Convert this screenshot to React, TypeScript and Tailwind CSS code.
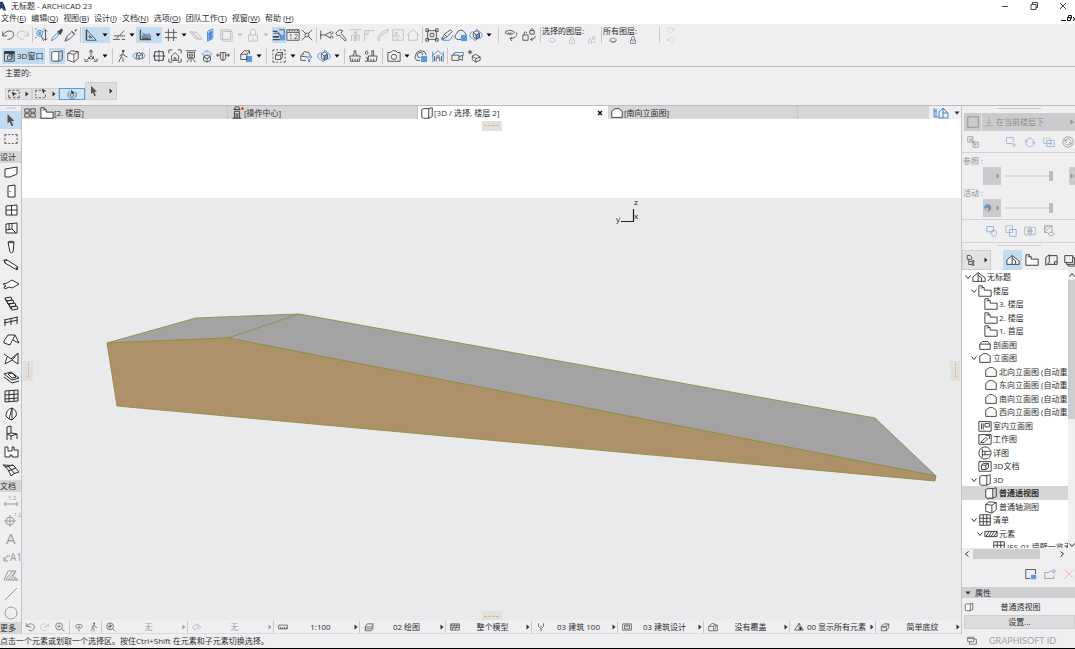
import type { ReactNode } from "react";
import clsx from "clsx";

type Glyph = {
  d?: string; // outline in the text colour
  f?: string; // solid in the text colour
  b?: string; // blue outline
  bf?: string; // blue solid
  w?: string; // white backing
  t?: [number, number, number, string][];
};

const GLYPHS: Record<string, Glyph> = {
  undo: { d: "M2 4v5h5M2 9C4 3 14 1 14.500 7.500 14.500 11 11 13 7.500 13" },
  redo: { d: "M14 4v5H9M14 9C12 3 2 1 1.500 7.500 1.500 11 5 13 8.500 13" },
  zoomSelect: { d: "M12 2v12M10 4l2-2 2 2M10 12l2 2 2-2M7 9l3 6", b: "M9 6A3.500 3.500 0 112 6a3.500 3.500 0 017 0zM0 1h2M9 1h2M0 11h2", bf: "M4 4h3v4H4z" },
  dropper: { f: "M8 4l2-1 3-2.500 2 2L13 6l-1 2z", d: "M9 5l2.500 2.500", b: "M8 6l-5 5-1.500 3.500L5 13l5-5z" },
  syringe: { f: "M9 3l4 4-1 1-4-4zM12 3l2-2 1 1-2 2z", d: "M8 5l-5 5-2 5 5-2 5-5", b: "M4 11l-2 3" },
  setSquare: { d: "M3 2l11 12M3 2v12h11M6 8.500V11h3z", f: "M2 2h1.500v12H2z" },
  snap: { d: "M1 13h8M2 9h6l6-6M9 9h6M8 9l-3 3M11 13h4" },
  guide: { f: "M2 2h1.500v12H2zM2 12.500h13V14H2z", d: "M5 9h9v3H5zM5 6l3 2M6 10.500h6", b: "M6 7h8" },
  grid: { d: "M5 1v14M11 1v14M1 5h14M1 11h14" },
  plane: { d: "M1 4l6 8 8 1-6-8zM3 4l7 9M5 5l7 8" },
  planeV: { b: "M4 4l6-3v11l-6 3zM4 8l6-3M4 12l6-3M7 2v12", bf: "M5 5l4-2v9l-4 2z" },
  square: { d: "M2 2h11v11H2zM4 4h11v11H4z" },
  lock: { d: "M3 8h10v7H3zM5 8V4a3 3 0 016 0v4M8 11v2" },
  trace: { f: "M1 3h5v1.500H1zM1 9h7v2H1zM1 12.500h8V14H1z", d: "M2 6h5l3 4M6 4l4 4M8 2h6v4", bf: "M9 9l6-3v8H9z" },
  ruler: { d: "M1 2h14v12H1zM1 5h14M4 2v2M7 2v2M10 2v2M13 2v2", t: [[3, 13, 8, "1"], [9, 13, 8, "2"]] },
  cross: { d: "M2 2l4 4h4l4-4M2 14l4-4V6M14 14l-4-4V6M6 10h4" },
  trim: { d: "M2 3v10M1 8h6l7-4M7 8l7 4M13 5a1.500 1.500 0 102-1M13 11a1.500 1.500 0 112 1" },
  hammer: { d: "M2 6l4-4 4 1-2 3 6 7-1 2-7-7-2 1z" },
  raise: { d: "M1 2h14M4 15V8h3v7M10 15V8h3v7M8.500 4v11M6.500 6l2-2 2 2" },
  corner: { d: "M3 15V3h11M3 7h4V3" },
  fillet: { d: "M2 15C2 8 7 3 14 2M4 15c0-6 4-9 9-10M12 1l2 1-1 3" },
  resize: { d: "M2 2h12v12H2zM5 5l6 6M5 8V5h3M2 9h5v5" },
  house: { d: "M1 8l7-6 7 6M3 7v7h10V7" },
  group: { d: "M3 3h10v10H3zM6 6h4v4H6zM1 1h3v3H1zM12 1h3v3h-3zM1 12h3v3H1zM12 12h3v3h-3z" },
  pen: { d: "M2 13l3-6 7-5 2 2-6 6zM5 7l3 3", b: "M3 14h8l4-6M1 11l4 3" },
  roundSave: { d: "M8 13H4a3.500 3.500 0 01-1-6.500 5 5 0 019.500-1L14 8", bf: "M8 8h7v7H8z" },
  orbitCube: { d: "M5 5l4-2 3 3v5l-4 2-3-3zM5 5l3 3 4-2M8 8v5", b: "M4 4C0 6 0 11 4 12M12 4c4 2 4 7 0 8M8 1l4 3M8 15l-4-3", bf: "M8 8l4-2v5l-4 2z" },
  eyeRot: { d: "M1 5c3-3 8-3 11 0-3 3-8 3-11 0zM5 5a1.500 1.500 0 003 0M14 5c2 3-1 7-7 7M9 10l-2 2 2 3" },
  locks: { d: "M1 8h6v6H1zM2.500 8V6a1.500 1.500 0 013 0M9 3h5v4H9zM10 3a1.500 1.500 0 013-1M15 9c0 3-2 4-5 4M12 11l-2 2 2 2" },
  eye: { d: "M1 8c4-5 10-5 14 0-4 5-10 5-14 0zM2 9c4 5 9 5 13 0" },
  window3d: { d: "M2 2h13v13H2zM2 4.500h13M6 8h5v5H6zM6 8l2-2h5l-2 2M13 6v5l-2 2", f: "M2 2h13v2.500H2z" },
  persp: { w: "M2 3h8v10H2z", d: "M2 4l2-1h6v11H4l-2-1zM10 3l4-1v10l-4 2" },
  axo: { w: "M2 5h8v9H2z", d: "M2 5l7 1v9l-7-2zM2 5l4-3 8 1-5 3M14 3v8l-5 4" },
  axes: { d: "M8 2v6l-5 5M8 8l5 5M6 4l2-3 2 3M5 9a3 3 0 106-1M1 11v3h4M15 11v3h-4" },
  walk: { d: "M8 5l-2 4 2 2v4M6 9l-3 6M8 5l2 3 3 1M7 6L4 8", f: "M7 1h2.500v3H7z" },
  orbit: { d: "M5 6l3-2 4 2v4l-4 2-3-2zM5 6l3 2 4-2M8 8v4", b: "M5 11C0 10 0 5 6 4M11 11c5-1 5-6 0-7M6 13l-2-2 2-2" },
  globe: { d: "M3 3h10v10H3zM8 1v14M1 8h14M4 3C2 6 2 10 4 13M12 3c2 3 2 7 0 10" },
  fitHome: { d: "M1 5V1h4M11 1h4v4M15 11v4h-4M5 15H1v-4M4 8l4-4 4 4v5H4zM7 13v-3h2v3" },
  station: { d: "M2 2h12M4 4h8v6H4zM6 6h4v2H6zM7 10l-4 5M9 10l4 5M8 10v5" },
  sunOrbit: { d: "M4 9l4-2 4 2v4l-4 2-4-2zM4 9l4 2 4-2M8 11v4", b: "M2 5h2M5 2l1 2M8 1v3M11 2l-1 2M14 5h-2M3 7h10" },
  section: { d: "M5 4h6v6a3 3 0 01-6 0zM0 7h5M11 7h5M2 5v4M14 5v4M8 4v9" },
  cubeSave: { d: "M2 6l4-4h6l-3 4v6H2zM2 6h7M12 2v4", bf: "M8 8h7v7H8z" },
  marqueeCube: { d: "M1 1h2M5 1h2M9 1h2M13 1h2v2M15 5v2M15 9v2M15 13v2h-2M11 15H9M7 15H5M3 15H1v-2M1 11V9M1 7V5M1 3V1M4 7h6v5H4zM4 7l2-3h6v5l-2 3M10 7l2-3" },
  filterCube: { d: "M2 8l4-5 5 1 2 4M2 8v5h6M2 8l6 1M4 5l2 2", b: "M8 9h7l-3 3v3l-1-1v-2z" },
  brush: { d: "M2 8h12l-1 6H3zM6 8V6h1V2h2v4h1v2M5 11v3M8 11v3M11 11v3" },
  brushes: { d: "M5 8h10l-1 6H5zM9 8V2h2v6M3 2C1 4 1 6 3 6s2-2 0-4zM2 10h2v4H1M8 11v3M11 11v3" },
  camera: { d: "M1 4h3l2-2h4l2 2h3v10H1zM11 9a3 3 0 11-6 0 3 3 0 016 0z" },
  cameraSave: { d: "M7 13H3L1 10l2-6 4-2 5 1 2 4M10 7a3 3 0 10-3 3", bf: "M8 8h7v7H8z" },
  homeBars: { b: "M2 3v12M14 3v12M1 8l7-6 7 6", d: "M4 8v6M12 8v6M6 14v-4h4v4M6 8h4" },
  video: { d: "M1 7h8v6H1zM9 9l4-2v6l-4-2M3 7l1-3", b: "M4 4h10v4" },
  sunCube: { d: "M6 8l4-2 5 3v4l-5 2-4-3zM6 8l4 3 5-2M10 11v4M2 2l3 3M5 2L2 5M3.500 1v5M1 3.500h5" },
  marqueePick: { d: "M1 3h3M6 3h3M11 3h4M1 3v3M1 9v4h3M7 13h3M15 5v3M12 13h3v-3", f: "M5 5l7 3-4 1-1 3z" },
  marquee: { d: "M1 3h2M5 3h3M1 3v3M1 8v2M1 12v1h2M5 13h3M10 13h3M14 9v3", f: "M9 1l6 3-3 1-1 3z" },
  rotateSel: { d: "M4 4C0 7 1 15 8 15s9-7 5-11M11 9a3 3 0 11-6 0 3 3 0 016 0z", f: "M6 1l6 5-3 1-1 2z" },
  pointer: { f: "M4 1l8 8H8.500l2 5-2 1-2-5L4 12z" },
  tabsGrid: { d: "M1 2.500h6v4.500H1zM9 2.500h6v4.500H9zM1 9h6v4.500H1zM9 9h6v4.500H9z" },
  story: { w: "M1 3h5v4h9v6H1z", d: "M1 2h4v2h2v3h8v7H1zM3 4.500h2" },
  action: { d: "M4 4h8M5 4l1-3h4l1 3M5 6h6M5 6v8M11 6v8M3 14h10M7 8v6M9 8v6" },
  elevation: { w: "M2 13V6l4-3h4l4 3v7z", d: "M2 13V6l4-3h4l4 3v7z" },
  navHome: { b: "M1 3v9h4M1 6h3M3 4v8M6 13V7l4-4 5 5v5H6M10 3v5h5M10 8v5" },
  sectionMark: { w: "M2 13V7l3-3h6l3 3v6z", d: "M2 13V7l3-3h6l3 3v6zM2 7h12" },
  project: { w: "M1 13V8l6-5 8 5v5z", d: "M1 13V8l6-5 8 6v4zM7 3v10M7 6l4 3v4" },
  interior: { d: "M1 3h14v11H1zM4 5v7M6 5v7M8 5h5v4H8z" },
  worksheet: { d: "M1 3h14v11H1zM3 12l6-6 2 2-4 4zM9 4h4v4" },
  detail: { d: "M15 8A7 7 0 111 8a7 7 0 0114 0zM5 3v10M5 6h9M5 10h9M8 6v4" },
  doc3d: { d: "M1 3h14v11H1zM4 7h5v5H4zM4 7l2-2h6v5l-3 2M9 7l3-2" },
  list: { w: "M2 2h12v12H2z", d: "M2 2h12v12H2zM6 2v12M10 2v12M2 6h12M2 10h12" },
  hatch: { d: "M1 5h14v6H1zM2 11l4-6M5 11l4-6M8 11l4-6M11 11l4-6" },
  layout: { d: "M2 14V5l4-3v9zM6 3h9v10H4M12 13v-3h3" },
  publish: { d: "M2 3h9v8H2zM4 11v2h9V5h-2M6 13v2h9V7h-2" },
  tree: { d: "M3 2h4l2 2v3H3zM5 7v7h3M5 10h3M9 9h3v2H9zM9 13h3v2H9z" },
  under: { d: "M1 14h14M8 2v9M5 8l3 3 3-3" },
  swap: { d: "M1 1h7v7H1zM8 8h7v7H8zM4 4l8 8M4 7V4h3M12 9v3H9" },
  move: { b: "M10 10H2V2h9v6", d: "M12 9v6M9 12h6" },
  rotate: { b: "M3 6l5-4 5 4v6l-5 3-5-3z", d: "M1 8l2-3 2 3M15 8l-2 3-2-3" },
  offset: { d: "M1 3h9v7H1z", b: "M5 6h10v8H5zM7 10h5M10 8l2 2-2 2" },
  refresh: { d: "M15 8A7 7 0 111 8a7 7 0 0114 0zM4 7c1-4 7-4 8 0M12 9c-1 4-7 4-8 0M4 4v3h3M12 12V9H9" },
  sheet: { d: "M2 2h12v12H2z" },
  rgb: { f: "M8 2a5 5 0 015 5H8zM8 13a5 5 0 005-6H8z", bf: "M8 2a5 5 0 00-5 8l5-3z", d: "M3 10c2 4 7 4 9 1" },
  handMove: { b: "M1 2h9v7H1z", d: "M6 9l2-2 2 1 1-1 2 1 1 1v4l-2 2H9z" },
  overlap: { d: "M1 1h9v9H1z", b: "M6 6h9v9H6z" },
  splitView: { d: "M1 3h5v10H1zM10 3h5v10h-5z", b: "M8 1v14M4 8h8" },
  shadeDisc: { d: "M2 1h10v8M2 1v9h4M3 9l8-8M2 6l5-5M7 12c2-3 6-3 8 0-2 3-6 3-8 0z" },
  newView: { d: "M1 2h13v6M1 2v12h6", bf: "M8 9h7v6H8z" },
  newFolder: { d: "M1 14V6h5l2-2h2M1 14h12v-4", b: "M13 1v7M9.500 4.500h7M11 2l4 5M15 2l-4 5" },
  remove: { d: "M2 2l12 12M14 2L2 14" },
  cascade: { d: "M1 2h10v7H1zM1 4h10M4 9v4h11V5h-4" },
  zoomUndo: { d: "M2 2v5h5M3 7c2-6 12-5 12 1s-8 8-10 4M6 8h4" },
  zoomRedo: { d: "M14 2v5H9M13 7C11 1 1 2 1 8s8 8 10 4M6 8h4" },
  zoomIn: { d: "M12 7A5.500 5.500 0 111 7a5.500 5.500 0 0111 0zM11 11l4 4M4 7h5M6.500 4.500v5" },
  fit: { d: "M12 7A5.500 5.500 0 111 7a5.500 5.500 0 0111 0zM11 11l4 4M3 5l3 3M10 5L7 8M3 9l7-4M6.500 2v10" },
  turn: { d: "M6 10C1 9 1 4 8 4s7 5 2 6M8 7v8M6 9l2-2 2 2" },
  angle: { d: "M1 9l5-5 4 4-5 5zM8 3l6 5-4 4" },
  scale: { d: "M1 5h14v6H1zM4 8v3M7 8v3M10 8v3M13 8v3" },
  layers: { d: "M2 8l3-5h10l-3 5zM2 11h10l3-5M2 14h10l3-5M2 8v6" },
  model: { d: "M1 3h14v10H1zM1 6h14M1 9h14M4 3l-2 3M8 3l-2 3M12 3l-2 3M6 6l2 3M10 6l2 3M5 9l-2 4M10 9l-2 4" },
  penSet: { d: "M4 2v5l4 4 4-4V2M8 11v4M7 7h2" },
  frame: { d: "M1 3h14v10H1zM4 5h8v6H4zM6 7h4" },
  override: { d: "M1 7h8v7H1zM3 7c0-6 9-6 10 0M9 5h6v9H9M11 8h2M11 11h2" },
  reno: { d: "M1 13h14L8 2zM8 2v11", f: "M9 8h3v5H9z" },
  solid: { d: "M2 7h8v7H2zM2 7l4-4h8l-4 4M14 3v6l-4 5M4 9h4" },
  tMarquee: { d: "M1 3h2M5 3h2M9 3h2M13 3h2v2M15 7v2M15 11v2h-2M11 13H9M7 13H5M3 13H1v-2M1 9V7M1 5V3" },
  tWall: { w: "M2 4l12-2v8L2 14z", d: "M2 5l12-2v7L7 13H2z" },
  tDoor: { w: "M5 3l7-1v12H5z", d: "M5 3l7-1v12H5zM7 8v1" },
  tWindow: { w: "M3 4l11-1v10H3z", d: "M3 4l11-1v10H3zM8.500 3.500V13M3 8h11" },
  tCorner: { w: "M3 4l11-1v10H3z", d: "M3 4l11-1v10H3zM9 3v6l4 4M9 9l-6 1M6 4v6" },
  tColumn: { w: "M5 2h6l-1 12H7z", d: "M5 3c1-1 5-1 6 0l-1 10c-1 1-2 1-3 0zM5 3c1 1 5 1 6 0" },
  tBeam: { w: "M1 4l3-1 11 7v2h-2z", d: "M1 3h3l11 7-1 3L2 6zM1 3l1 3M4 3l-2 1M14 13l-1-3" },
  tSlab: { w: "M0 9l3-3 6-2 7 4-7 4-7 0z", d: "M0 8l4-1 5-3 7 4-7 4-3-1-4 2-1-2 2-1z" },
  tStair: { d: "M2 3l6-1 1 3-6 1zM4 6l6-1 1 3-6 1zM6 9l6-1 1 3-6 1zM8 12l6-1 1 3-6 1zM2 3l6 11" },
  tRail: { d: "M1 7l14-3M1 10l14-3M2 7v6M8 5v7M14 4v7" },
  tRoof: { w: "M1 9l5-6 6 0 4 8-5-2-4 5z", d: "M1 9l4-6h7l-5 10-6-2zM12 3l4 8-4-2-2-1" },
  tShell: { w: "M1 3l7 5 7-6v11l-6-4-7 4z", d: "M1 3l7 5 7-6v11L9 9l-7 4 2-7M15 2L9 9" },
  tSkylight: { d: "M1 5l7-2 8 6-7 2zM1 8l8 6 7-2M5 5l4-1 4 4-4 1z" },
  tCurtain: { d: "M2 3l13-1v11L2 14zM6 3v11M11 2v11M2 7l13-1M2 11l13-1" },
  tMorph: { w: "M3 7l6-5v12l-5-1z", d: "M9 2C5 3 3 6 3 10l3 3 3 1V2M9 2c4 2 5 5 4 8l-4 4M9 2L6 13" },
  tChair: { d: "M4 2l4-1v7l6 1M4 2v7l4 2 6-2M4 9v6M8 11v4M14 9v5M8 8l-4 1" },
  tZone: { w: "M2 2h8v4h4v8H2z", d: "M2 3h3v4h4V3h2v3h4v7H9v-2H7v2H2z" },
  tMesh: { d: "M0 3c5 0 7 1 10 0l6 7c-3 1-5 1-8 4C6 9 4 5 0 3zM5 4l7 8M2 5l8-2M5 9l8-3" },
  tDim: { d: "M1 11h14M2 9v4M14 9v4", t: [[5, 7, 6, "1.2"]] },
  tLevel: { d: "M11 9A4 4 0 113 9a4 4 0 018 0zM7 3v12M1 9h12", t: [[11, 5, 5, "1.2"]] },
  tText: { t: [[3, 14, 15, "A"]] },
  tLabel: { d: "M1 12l3-5h3M1 8v4h4", t: [[7, 12, 10, "A1"]] },
  tFill: { d: "M1 13l4-9h8l-3 5 5 4zM3 12l7-8M5 13l7-8M8 13l2-3M11 13l1-2" },
  tLine: { d: "M2 14L14 2" },
  tCircle: { d: "M14 8A6 6 0 112 8a6 6 0 0112 0z" },
};

function Icon({ name, className = "size-3.5" }: { name: string; className?: string }) {
  const g = GLYPHS[name];
  return (
    <svg viewBox="0 0 16 16" className={clsx("shrink-0 overflow-visible", className)} fill="none" strokeWidth={1} aria-hidden="true">
      {g.w && <path d={g.w} fill="#fff" />}
      {g.bf && <path d={g.bf} fill="#5a9ae6" />}
      {g.f && <path d={g.f} fill="currentColor" />}
      {g.d && <path d={g.d} stroke="currentColor" />}
      {g.b && <path d={g.b} stroke="#3f86de" />}
      {g.t?.map(([x, y, size, s]) => (
        <text key={s} x={x} y={y} fontSize={size} fill="currentColor">{s}</text>
      ))}
    </svg>
  );
}

function Caret({ down = false, className = "" }: { down?: boolean; className?: string }) {
  return (
    <svg viewBox="0 0 6 6" className={clsx("size-1.5 shrink-0", className)} fill="currentColor" aria-hidden="true">
      <path d={down ? "M0.500 1.500h5L3 4.500z" : "M1.500 0.500v5L4.500 3z"} />
    </svg>
  );
}

const Sep = ({ className = "w-1" }: { className?: string }) => (
  <span className={clsx("flex h-4 shrink-0 justify-center", className)}>
    <span className="w-px bg-[#c9c9cb]" />
  </span>
);

function Tool({ icon, w = "w-3.5", menu, on, dim }: { icon: string; w?: string; menu?: string; on?: boolean; dim?: boolean }) {
  return (
    <button
      type="button"
      aria-label={icon}
      disabled={dim}
      className={clsx("flex h-4 shrink-0 items-center", on && "bg-[#bfdcf2]", dim ? "text-[#bcbcbf]" : "text-[#4a4a4c]")}
    >
      <span className={clsx("grid shrink-0 place-items-center", w)}>
        <Icon name={icon} />
      </span>
      {menu && (
        <span className={clsx("grid shrink-0 place-items-center", menu, !dim && "text-black")}>
          <Caret down />
        </span>
      )}
    </button>
  );
}

const MENUS = [
  ["文件", "E"],
  ["编辑", "Q"],
  ["视图", "B"],
  ["设计", "I"],
  ["文档", "N"],
  ["选项", "O"],
  ["团队工作", "T"],
  ["视窗", "W"],
  ["帮助 ", "H"],
];

function TitleBar() {
  return (
    <header className="bg-white">
      <div className="flex h-3 items-center">
        <svg viewBox="0 0 8 10" className="mr-1 h-2.5 w-[7px]" aria-hidden="true">
          <path d="M0 0h3l2 4 2 6H4L2 7 0 9z" fill="#23406f" />
        </svg>
        <h1 className="flex-1">无标题 - ARCHICAD 23</h1>
        <div className="flex items-center gap-[21px] pr-2 text-[#444]">
          <button type="button" aria-label="Minimize">
            <svg viewBox="0 0 8 8" className="size-2" stroke="currentColor"><path d="M1 4.500h6" /></svg>
          </button>
          <button type="button" aria-label="Restore">
            <svg viewBox="0 0 8 8" className="size-2" fill="none" stroke="currentColor"><path d="M1 2.500h5v5H1zM2.500 2.500v-2h5v5H6" /></svg>
          </button>
          <button type="button" aria-label="Close">
            <svg viewBox="0 0 8 8" className="size-2" stroke="currentColor"><path d="M1 1l6 6M7 1L1 7" /></svg>
          </button>
        </div>
      </div>
      <nav className="flex h-3 items-center gap-[5px] pl-px">
        {MENUS.map(([label, key]) => (
          <button key={key} type="button" className="whitespace-pre">
            {label}(<u>{key}</u>)
          </button>
        ))}
        <svg viewBox="0 0 14 8" className="ml-auto h-2 w-3.5" fill="none" stroke="#111" aria-hidden="true">
          <path d="M0 6.500h5M6.500 3.500h3v3h-3zM7.500 3.500v-2h3v3h-1M12 3l3 4M15 3l-3 4" />
        </svg>
      </nav>
    </header>
  );
}

function Toolbars() {
  return (
    <div className="border-b border-[#bcbcbf]">
      <div className="flex h-[21px] items-center overflow-hidden">
        <Tool icon="undo" w="w-[15px]" />
        <Tool icon="redo" w="w-[15px]" dim />
        <Sep />
        <Tool icon="zoomSelect" w="w-4" />
        <Tool icon="dropper" />
        <Tool icon="syringe" />
        <Sep />
        <Tool icon="setSquare" w="w-[18px]" menu="w-2.5" on />
        <Tool icon="snap" w="w-[18px]" menu="w-2" />
        <Tool icon="guide" w="w-[18px]" menu="w-2" on />
        <Tool icon="grid" w="w-[18px]" menu="w-2" />
        <Tool icon="plane" w="w-4" dim />
        <Tool icon="planeV" />
        <Tool icon="square" w="w-4" menu="w-3" dim />
        <Tool icon="lock" menu="w-3" dim />
        <Tool icon="trace" on />
        <Tool icon="ruler" />
        <Tool icon="cross" />
        <Sep />
        <Tool icon="trim" w="w-4" />
        <Tool icon="hammer" />
        <Tool icon="raise" dim />
        <Tool icon="corner" dim />
        <Tool icon="fillet" dim />
        <Tool icon="resize" w="w-4" dim />
        <Tool icon="house" dim />
        <Sep />
        <Tool icon="group" w="w-4" />
        <Tool icon="pen" />
        <Tool icon="roundSave" />
        <Tool icon="orbitCube" w="w-4" menu="w-2.5" />
        <Sep className="w-2" />
        <Tool icon="eyeRot" w="w-[18px]" />
        <Tool icon="locks" w="w-[18px]" />
        <Sep />
        <div className="flex w-[57px] shrink-0 flex-col">
          <span className="leading-[10px]">选择的图层:</span>
          <div className="flex gap-2 pl-1 text-[#b0b0b3]">
            <Icon name="eye" className="h-2 w-3" />
            <Icon name="lock" className="h-2 w-3" />
            <Icon name="locks" className="h-2 w-3" />
          </div>
        </div>
        <Sep />
        <div className="flex w-[54px] shrink-0 flex-col">
          <span className="leading-[10px]">所有图层:</span>
          <div className="flex gap-2 pl-1">
            <Icon name="eye" className="h-2 w-3" />
            <Icon name="lock" className="h-2 w-3" />
          </div>
        </div>
        <Sep />
        <div className="flex w-5 flex-col items-center gap-0.5 text-[#bcbcbf]">
          <Icon name="redo" className="size-2" />
          <Icon name="undo" className="size-2" />
        </div>
      </div>
      <div className="flex h-[21px] items-center overflow-hidden">
        <button type="button" className="mr-1 ml-0.5 flex h-4 w-[43px] shrink-0 items-center gap-0.5 bg-[#bfdcf2] pl-px whitespace-nowrap">
          <Icon name="window3d" className="size-3" />
          3D窗口
        </button>
        <Tool icon="persp" w="w-4" on />
        <Tool icon="axo" w="w-4" />
        <Tool icon="axes" w="w-5" menu="w-2" />
        <Sep className="w-1.5" />
        <Tool icon="walk" w="w-4" />
        <Tool icon="orbit" w="w-4" />
        <Sep />
        <Tool icon="globe" w="w-4" />
        <Tool icon="fitHome" w="w-4" />
        <Tool icon="station" w="w-4" />
        <Tool icon="sunOrbit" w="w-4" />
        <Tool icon="section" w="w-4" />
        <Sep className="w-1.5" />
        <Tool icon="cubeSave" w="w-[18px]" menu="w-2" />
        <Sep className="w-1.5" />
        <Tool icon="marqueeCube" w="w-5" menu="w-2" />
        <Tool icon="filterCube" w="w-[18px]" />
        <Tool icon="orbitCube" w="w-[18px]" menu="w-2" />
        <Sep className="w-1.5" />
        <Tool icon="brush" w="w-4" />
        <Tool icon="brushes" w="w-4" />
        <Sep className="w-1.5" />
        <Tool icon="camera" w="w-[18px]" menu="w-2" />
        <Tool icon="cameraSave" w="w-5" />
        <Tool icon="homeBars" />
        <Sep />
        <Tool icon="video" w="w-[18px]" />
        <Tool icon="sunCube" />
      </div>
    </div>
  );
}

function InfoBox() {
  const cell = "flex items-center justify-center border";
  return (
    <div className="flex h-[39px] flex-col justify-between border-b border-[#bcbcbf] pb-[5px] pl-[5px]">
      <span className="leading-[11px]">主要的:</span>
      <div className="flex items-end">
        <button type="button" aria-label="Selection method" className={clsx(cell, "h-3 w-[27px] gap-1 border-[#cfcfd1] bg-[#e2e2e4]")}>
          <Icon name="marqueePick" className="size-3" />
          <Caret />
        </button>
        <button type="button" aria-label="Marquee" className={clsx(cell, "h-3 w-[27px] gap-1 border-[#cfcfd1] bg-[#e2e2e4]")}>
          <Icon name="marquee" className="size-3" />
          <Caret />
        </button>
        <button type="button" aria-label="Quick selection" className={clsx(cell, "h-3 w-[26px] border-[#4d9fe0] bg-[#cbe4f7]")}>
          <Icon name="rotateSel" className="size-2.5" />
        </button>
        <button type="button" aria-label="Arrow" className={clsx(cell, "h-[18px] w-8 gap-2 border-[#cfcfd1] bg-[#dededf]")}>
          <Icon name="pointer" className="size-3 text-[#555]" />
          <Caret />
        </button>
      </div>
    </div>
  );
}

const DESIGN = ["tWall", "tDoor", "tWindow", "tCorner", "tColumn", "tBeam", "tSlab", "tStair", "tRail", "tRoof", "tShell", "tSkylight", "tCurtain", "tMorph", "tChair", "tZone", "tMesh"];
const DOCUMENT = ["tDim", "tLevel", "tText", "tLabel", "tFill", "tLine", "tCircle"];

function Toolbox() {
  const tool = (name: string) => (
    <button key={name} type="button" aria-label={name} className="grid min-h-0 flex-1 place-items-center">
      <Icon name={name} className="size-4" />
    </button>
  );
  const head = "h-3 shrink-0 bg-[#d6d6d8] leading-3 text-[#333]";
  return (
    <aside className="flex w-[22px] shrink-0 flex-col overflow-hidden border-r border-[#c4c4c6]">
      <div className="mx-auto mt-px mb-0.5 h-0.5 w-2.5 shrink-0 bg-[#dadadc]" />
      <button type="button" aria-label="Arrow" className="grid h-[18px] shrink-0 place-items-center bg-[#bfdcf2] text-[#555]">
        <Icon name="pointer" />
      </button>
      <button type="button" aria-label="Marquee" className="mb-[3px] grid h-[19px] shrink-0 place-items-center">
        <Icon name="tMarquee" />
      </button>
      <div className={head}>设计</div>
      <div className="flex min-h-0 grow-[17] basis-0 flex-col">{DESIGN.map(tool)}</div>
      <div className={head}>文档</div>
      <div className="flex min-h-0 grow-[7] basis-0 flex-col text-[#9a9a9c]">{DOCUMENT.map(tool)}</div>
      <div className={head}>更多</div>
    </aside>
  );
}

function Tab({ icon, label, active }: { icon: string; label: string; active?: boolean }) {
  return (
    <div className={clsx("flex h-full w-[190px] min-w-0 items-center", active ? "bg-white" : "border-r border-[#c8c8ca]")}>
      <button type="button" role="tab" aria-selected={!!active} className="flex flex-1 items-center pl-0.5 whitespace-nowrap">
        <span className="relative">
          <Icon name={icon} className="size-3.5" />
          {icon === "action" && <span className="absolute top-px right-0 size-[3px] rounded-full bg-[#f04a2a]" />}
        </span>
        {label}
      </button>
      {active && (
        <button type="button" aria-label="Close tab" className="pr-[5px]">
          <svg viewBox="0 0 6 6" className="size-1.5" stroke="#111" strokeWidth="1.500"><path d="M1 1l4 4M5 1L1 5" /></svg>
        </button>
      )}
    </div>
  );
}

function Viewport() {
  return (
    <div className="relative min-h-0 flex-1 overflow-hidden bg-[#e8eaeb]">
      <svg viewBox="22 119 939 501" preserveAspectRatio="none" className="absolute inset-0 size-full" aria-label="3D model">
        <rect x="22" y="119" width="939" height="79" fill="#fff" />
        <path d="M107 343l89-25 103-4 576 104 61 58-708-138z" fill="#a3a3a3" stroke="#8c8e45" strokeWidth="0.900" />
        <path d="M107 343l121-5 708 138-1 5-818-75z" fill="#ae9168" stroke="#8c8e45" strokeWidth="0.900" />
        <path d="M228 338l71-24" stroke="#8c8e45" strokeWidth="0.900" />
        <path d="M621 221.500h12.500V209" stroke="#222" strokeWidth="1.200" fill="none" />
        <g fontSize="8" fill="#222">
          <text x="634" y="205">z</text>
          <text x="616" y="222">y</text>
          <text x="634" y="219">x</text>
        </g>
        <g fill="#e0e0df">
          <rect x="482" y="121" width="20" height="10" />
          <rect x="482" y="611" width="20" height="9" />
          <rect x="23" y="361" width="10" height="20" />
          <rect x="950" y="361" width="10" height="20" />
        </g>
        <path d="M484 125.500h16M484 616.500h16M28.500 363v16M955.500 363v16" stroke="#eeb27f" strokeDasharray="3 1" />
      </svg>
    </div>
  );
}

const VIEW_OPTIONS = [
  { icon: "fit", label: "无", dim: true },
  { icon: "angle", label: "无", dim: true },
  { icon: "scale", label: "1:100" },
  { icon: "layers", label: "02 绘图" },
  { icon: "model", label: "整个模型" },
  { icon: "penSet", label: "03 建筑 100" },
  { icon: "frame", label: "03 建筑设计" },
  { icon: "override", label: "没有覆盖" },
  { icon: "reno", label: "00 显示所有元素" },
  { icon: "solid", label: "简单底纹" },
];

function QuickOptions() {
  return (
    <div className="flex h-3.5 shrink-0 items-center border-b border-[#dcdcde]">
      <div className="flex shrink-0 items-center text-[#4a4a4c]">
        {["zoomUndo", "zoomRedo", "zoomIn"].map((n) => (
          <button key={n} type="button" aria-label={n} className={clsx("grid w-[15px] place-items-center", n === "zoomRedo" && "text-[#bcbcbf]")}>
            <Icon name={n} className="size-2.5" />
          </button>
        ))}
        <Sep className="h-3 w-1" />
        {["turn", "walk"].map((n) => (
          <button key={n} type="button" aria-label={n} className="grid w-[15px] place-items-center">
            <Icon name={n} className="size-2.5" />
          </button>
        ))}
      </div>
      {VIEW_OPTIONS.map((o) => (
        <button
          key={o.icon}
          type="button"
          className={clsx("flex h-3 min-w-0 flex-1 items-center border-l border-[#c9c9cb] pl-1 whitespace-nowrap", o.dim && "text-[#9c9c9f]")}
        >
          <Icon name={o.icon} className={clsx("size-2.5", o.icon === "fit" && "text-[#4a4a4c]")} />
          <span className="flex-1 text-center">{o.label}</span>
          <Caret />
        </button>
      ))}
    </div>
  );
}

function TraceRow({ label, icon, more }: { label: string; icon?: string; more?: boolean }) {
  return (
    <div>
      <label htmlFor={label} className="block h-3.5 pl-px leading-[15px]">{label} :</label>
      <div className="flex h-[18px] items-center pl-[21px]">
        <span className="flex h-[18px] w-[18px] shrink-0 items-center justify-end gap-0.5 bg-[#cbcbcd]">
          {icon && <Icon name={icon} className="size-2.5" />}
          <Caret />
        </span>
        <input
          id={label}
          type="range"
          defaultValue={100}
          disabled
          className="mr-4 ml-1 h-2.5 w-12 shrink-0 appearance-none bg-transparent [&::-webkit-slider-runnable-track]:h-0.5 [&::-webkit-slider-runnable-track]:bg-[#dadadc] [&::-webkit-slider-thumb]:-mt-1 [&::-webkit-slider-thumb]:h-2.5 [&::-webkit-slider-thumb]:w-1 [&::-webkit-slider-thumb]:appearance-none [&::-webkit-slider-thumb]:bg-[#bcbcbf]"
        />
        {more && (
          <span className="flex h-[18px] flex-1 items-center bg-[#cbcbcd]">
            <Caret />
          </span>
        )}
      </div>
    </div>
  );
}

function TracePalette() {
  return (
    <section className="shrink-0 overflow-hidden text-[#8f8f92]">
      <div className="mx-auto mt-0.5 mb-1 h-px w-11 bg-[#cfcfd1]" />
      <div className="ml-0.5 flex h-[18px] items-center bg-[#cbcbcd] whitespace-nowrap">
        <button type="button" aria-label="Trace" className="grid h-full w-[18px] place-items-center border-r border-[#e4e4e6]">
          <Icon name="sheet" />
        </button>
        <button type="button" className="flex flex-1 items-center gap-0.5 pl-0.5">
          <Icon name="under" className="size-2.5" />
          <span className="flex-1 text-left">在当前楼层下</span>
          <Caret />
        </button>
      </div>
      <div className="flex h-[22px] items-center border-b border-[#d2d2d4] pl-[5px]">
        <Icon name="swap" className="mr-[26px] size-3" />
        <div className="flex gap-[7px]">
          <Icon name="move" className="size-3 opacity-60" />
          <Icon name="rotate" className="size-3 opacity-60" />
          <Icon name="offset" className="size-3 opacity-60" />
          <Icon name="refresh" className="size-3" />
        </div>
      </div>
      <TraceRow label="参照" more />
      <TraceRow label="活动" icon="rgb" />
      <div className="mt-0.5 flex h-[24px] items-center gap-[7px] border-y border-[#d2d2d4] pl-6">
        <Icon name="handMove" className="size-3 opacity-70" />
        <Icon name="overlap" className="size-3 opacity-70" />
        <Icon name="splitView" className="size-3 opacity-70" />
        <Icon name="shadeDisc" className="size-3" />
      </div>
    </section>
  );
}

type Node = { level: number; icon: string; label: string; open?: boolean; selected?: boolean };

const TREE: Node[] = [
  { level: 0, icon: "project", label: "无标题", open: true },
  { level: 1, icon: "story", label: "楼层", open: true },
  { level: 2, icon: "story", label: "3. 楼层" },
  { level: 2, icon: "story", label: "2. 楼层" },
  { level: 2, icon: "story", label: "1. 首层" },
  { level: 1, icon: "sectionMark", label: "剖面图" },
  { level: 1, icon: "elevation", label: "立面图", open: true },
  { level: 2, icon: "elevation", label: "北向立面图 (自动重" },
  { level: 2, icon: "elevation", label: "东向立面图 (自动重" },
  { level: 2, icon: "elevation", label: "南向立面图 (自动重" },
  { level: 2, icon: "elevation", label: "西向立面图 (自动重" },
  { level: 1, icon: "interior", label: "室内立面图" },
  { level: 1, icon: "worksheet", label: "工作图" },
  { level: 1, icon: "detail", label: "详图" },
  { level: 1, icon: "doc3d", label: "3D文档" },
  { level: 1, icon: "persp", label: "3D", open: true },
  { level: 2, icon: "persp", label: "普通透视图", selected: true },
  { level: 2, icon: "axo", label: "普通轴测图" },
  { level: 1, icon: "list", label: "清单", open: true },
  { level: 2, icon: "hatch", label: "元素", open: true },
  { level: 3, icon: "list", label: "IES-01 墙壁一览表" },
];

const INDENT = ["pl-[3px]", "pl-[9px]", "pl-[15px]", "pl-[23px]"];

function Chevron({ d, className = "size-1.5" }: { d: string; className?: string }) {
  return (
    <svg viewBox="0 0 6 6" className={clsx("shrink-0", className)} fill="none" stroke="#333" aria-hidden="true">
      <path d={d} />
    </svg>
  );
}

function Navigator() {
  return (
    <section className="flex min-h-0 flex-1 flex-col">
      <div className="mx-auto mt-0.5 h-px w-11 shrink-0 bg-[#cfcfd1]" />
      <div className="mt-1 flex h-5 shrink-0 items-center">
        <button type="button" aria-label="Project chooser" className="mr-3 flex h-full w-[29px] shrink-0 items-center justify-center gap-1.5 border border-[#cfcfd1] bg-[#e2e2e4]">
          <Icon name="tree" className="size-3" />
          <Caret />
        </button>
        {["project", "story", "layout", "publish"].map((n, i) => (
          <button key={n} type="button" aria-label={n} className={clsx("grid h-full w-[19px] shrink-0 place-items-center", i === 0 && "bg-[#bfdcf2]")}>
            <Icon name={n} className="size-3.5" />
          </button>
        ))}
      </div>
      <div className="flex min-h-0 flex-1 bg-white">
        <ul className="min-w-0 flex-1 overflow-hidden">
          {TREE.map((n) => (
            <li
              key={n.label}
              className={clsx("flex h-3.5 items-center whitespace-nowrap even:h-[13px]", INDENT[n.level], n.selected && "bg-[#d6d6d8] font-bold")}
            >
              {n.open ? <Chevron d="M0.500 1.500L3 4.500l2.500-3" /> : <span className="w-1.5 shrink-0" />}
              <Icon name={n.icon} className="mx-px size-3.5" />
              {n.label}
            </li>
          ))}
        </ul>
        <div className="flex w-[7px] shrink-0 flex-col items-center bg-[#efeef0]">
          <Chevron d="M0.500 4.500L3 1.500l2.500 3" className="my-0.5 size-1.5" />
          <div className="h-1/2 w-full bg-[#cdcdcf]" />
          <Chevron d="M0.500 1.500L3 4.500l2.500-3" className="mt-auto size-1.5" />
        </div>
      </div>
      <div className="flex h-3 shrink-0 items-center pr-2.5 pl-0.5">
        <Chevron d="M4.500 0.500L1.500 3l3 2.500" />
        <div className="ml-[3px] h-2.5 w-[67px] bg-[#cdcdcf]" />
        <Chevron d="M1.500 0.500l3 2.500-3 2.500" className="ml-auto size-1.5" />
      </div>
      <div className="flex h-[27px] shrink-0 items-center justify-end gap-[7px]">
        <Icon name="newView" className="size-3" />
        <Icon name="newFolder" className="size-3 opacity-50" />
        <Icon name="remove" className="size-3 text-[#f0a898]" />
      </div>
      <h2 className="flex h-[11px] shrink-0 items-center gap-1 bg-[#d0d0d2] pl-[3px]">
        <Caret down />
        属性
      </h2>
      <div className="flex h-[17px] shrink-0 items-center pl-0.5">
        <Icon name="persp" className="size-2.5" />
        <span className="flex-1 pr-2 text-center">普通透视图</span>
      </div>
      <button type="button" className="mb-[5px] ml-0.5 h-3.5 shrink-0 border border-[#cfcfd1] bg-[#dcdcde] leading-3">设置...</button>
    </section>
  );
}

function Row({ children }: { children: ReactNode }) {
  return <div className="flex min-h-0 flex-1">{children}</div>;
}

export default function App() {
  return (
    <div className="flex h-screen flex-col overflow-hidden border-b border-black bg-[#efeef0] font-['Open_Sans','Noto_Sans_CJK_SC',sans-serif] text-[8px] leading-3 text-[#2e2e30]">
      <TitleBar />
      <Toolbars />
      <InfoBox />
      <Row>
        <Toolbox />
        <main className="flex min-w-0 flex-1 flex-col">
          <div role="tablist" className="flex h-[13px] shrink-0 items-center bg-[#d6d6d8]">
            <button type="button" aria-label="Tab overview" className="grid w-4 shrink-0 place-items-center">
              <Icon name="tabsGrid" className="size-3" />
            </button>
            <Tab icon="story" label="[2. 楼层]" />
            <Tab icon="action" label="[操作中心]" />
            <Tab icon="persp" label="[3D / 选择, 楼层 2]" active />
            <Tab icon="elevation" label="[南向立面图]" />
            <button type="button" aria-label="Navigator" className="ml-auto flex h-full w-8 shrink-0 items-center justify-between bg-[#efeef0] pr-px pl-1">
              <Icon name="navHome" className="size-4" />
              <Caret down />
            </button>
          </div>
          <Viewport />
          <QuickOptions />
        </main>
        <aside className="flex w-[114px] shrink-0 flex-col overflow-hidden border-l border-[#c4c4c6]">
          <TracePalette />
          <Navigator />
        </aside>
      </Row>
      <footer className="flex h-3.5 shrink-0 items-center">
        <p className="flex-1">点击一个元素或划取一个选择区。按住Ctrl+Shift 在元素和子元素切换选择。</p>
        <div className="flex w-[114px] items-center gap-3 pl-1.5 font-['Lato',sans-serif] text-[9px] text-[#a5a5a8]">
          <Icon name="cascade" className="size-2.5 text-[#444]" />
          GRAPHISOFT ID
        </div>
      </footer>
    </div>
  );
}
